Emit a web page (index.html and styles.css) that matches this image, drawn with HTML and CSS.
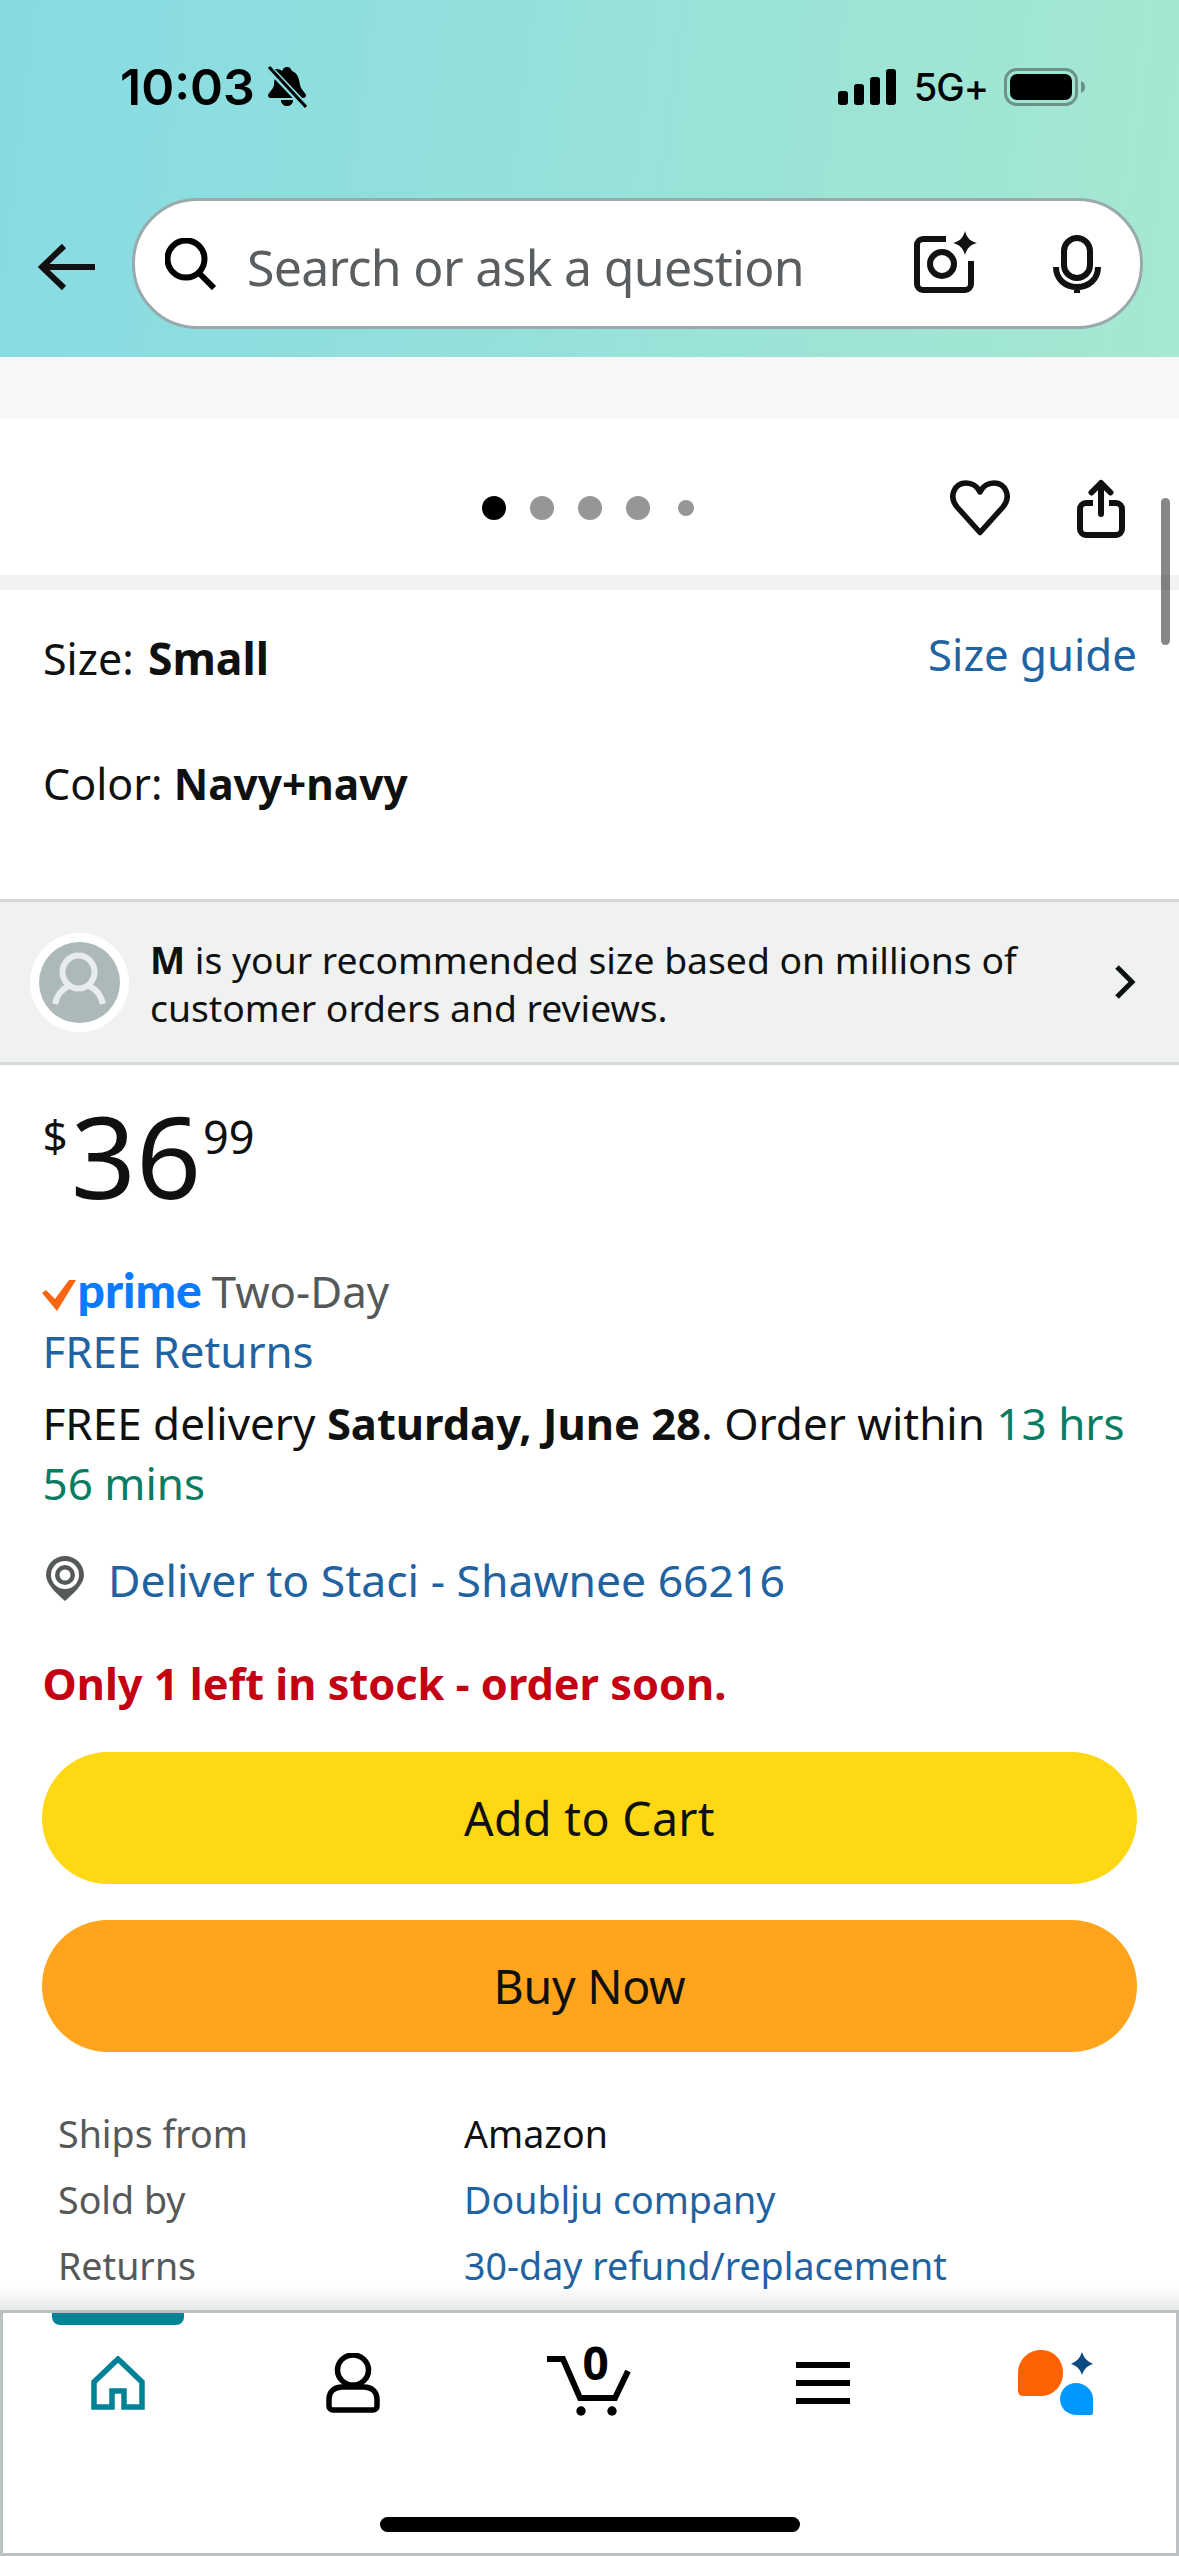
FILE: index.html
```html
<!DOCTYPE html>
<html lang="en">
<head>
<meta charset="utf-8">
<title>Product</title>
<link rel="stylesheet" href="styles.css">
</head>
<body>
<div class="screen">
  <header class="header">
    <div class="status">
      <div class="status-left">
        <span class="time">10:03</span>
        <svg class="bell" viewBox="0 0 40 42"><path d="M20 1c3 0 4 2 5 4 6 2 7 8 8 14 1 5 5 7 6 10 0 2-1 3-3 3H4c-2 0-3-1-3-3 1-3 5-5 6-10 0-3 0-5 2-8L5 5c2-3 8-2 10 0 1-2 2-4 5-4zM14 34h12c0 4-3 6-6 6s-6-2-6-6z" fill="#000"/><path d="M2 2l36 38" stroke="#86dce0" stroke-width="7" fill="none"/><path d="M2 1l37 40" stroke="#000" stroke-width="3" fill="none"/></svg>
      </div>
      <div class="status-right">
        <svg class="signal" viewBox="0 0 58 36"><rect x="0" y="22" width="10" height="14" rx="3"/><rect x="16" y="15" width="10" height="21" rx="3"/><rect x="32" y="8" width="10" height="28" rx="3"/><rect x="48" y="0" width="10" height="36" rx="3"/></svg>
        <span class="net">5G+</span>
        <svg class="battery" viewBox="0 0 82 38"><rect x="1.5" y="1.5" width="71" height="35" rx="11" fill="none" stroke="#6e9289" stroke-width="3"/><rect x="6" y="6" width="62" height="26" rx="7" fill="#000"/><path d="M77 13c3 1 4 3 4 6s-1 5-4 6z" fill="#6e9289"/></svg>
      </div>
    </div>
    <div class="search-row">
      <svg class="back" viewBox="0 0 58 48"><path d="M57 24H5M26 3L4 24l22 21" fill="none" stroke="#111" stroke-width="6"/></svg>
      <div class="search-bar">
        <svg class="search-icon" viewBox="0 0 52 52"><circle cx="21" cy="21" r="18.5" fill="none" stroke="#000" stroke-width="6"/><path d="M34 35l15 15" stroke="#000" stroke-width="6" fill="none"/></svg>
        <span class="placeholder">Search or ask a question</span>
        <svg class="camera" viewBox="0 0 64 62"><path d="M32 8H9a6 6 0 0 0-6 6v39a6 6 0 0 0 6 6h42a6 6 0 0 0 6-6V30" fill="none" stroke="#111" stroke-width="6"/><circle cx="28" cy="33" r="12" fill="none" stroke="#111" stroke-width="6"/><path d="M51 0c2 7 5 10 12 12-7 2-10 5-12 12-2-7-5-10-12-12 7-2 10-5 12-12z" fill="#111"/></svg>
        <svg class="mic" viewBox="0 0 48 58"><rect x="11" y="3" width="26" height="40" rx="13" fill="none" stroke="#111" stroke-width="6"/><path d="M3 32c0 12 9 20 21 20s21-8 21-20M24 50v8" fill="none" stroke="#111" stroke-width="6"/></svg>
      </div>
    </div>
  </header>

  <main class="content">
    <div class="strip"></div>
    <section class="gallery">
      <div></div>
      <div class="dots">
        <span class="dot dot-on"></span><span class="dot"></span><span class="dot"></span><span class="dot"></span><span class="dot dot-small"></span>
      </div>
      <div class="gallery-actions">
        <svg class="heart" viewBox="0 0 60 56"><path d="M30 52.500L7 27C-2 16 5 3 16 3c6 0 11 3 14 9 3-6 8-9 14-9 11 0 18 13 9 24z" fill="none" stroke="#0f1111" stroke-width="5.500" stroke-linejoin="round"/></svg>
        <svg class="share" viewBox="0 0 48 60"><path d="M16 25H9a6 6 0 0 0-6 6v20a6 6 0 0 0 6 6h30a6 6 0 0 0 6-6V31a6 6 0 0 0-6-6h-7" fill="none" stroke="#0f1111" stroke-width="6"/><path d="M24 36V5M14.500 14.500L24 5l9.500 9.500" fill="none" stroke="#0f1111" stroke-width="6" stroke-linecap="round" stroke-linejoin="round"/></svg>
      </div>
    </section>
    <div class="band"></div>
    <section class="options">
      <div class="option-row">
        <span>Size: <b class="val-size">Small</b></span>
        <a class="link size-guide">Size guide</a>
      </div>
      <div class="option-row color-row"><span>Color: <b class="val-color">Navy+navy</b></span></div>
    </section>
    <section class="recommend">
      <div class="avatar">
        <svg viewBox="0 0 81 81"><circle cx="40.500" cy="40.500" r="40.500" fill="#adb9b9"/><ellipse cx="39.500" cy="30" rx="16" ry="16.500" fill="none" stroke="#e8ecec" stroke-width="6"/><path d="M16 62c2-9 7-15 14-18M64 62c-2-9-7-15-14-18" fill="none" stroke="#e8ecec" stroke-width="6"/></svg>
      </div>
      <p class="recommend-text"><b>M</b> is your recommended size based on millions of<br>customer orders and reviews.</p>
      <svg class="chevron" viewBox="0 0 24 36"><path d="M4 3l15 15L4 33" fill="none" stroke="#0f1111" stroke-width="5"/></svg>
    </section>
    <section class="buybox">
      <div class="price"><span class="cur">$</span><span class="whole">36</span><span class="frac">99</span></div>
      <div class="prime-line">
        <svg class="check" viewBox="0 0 34 32"><path d="M0 14l4-3 9 9L27 1l7 0-19 31z" fill="#fa6511"/></svg>
        <span class="prime">prime</span>
        <span class="two-day">Two-Day</span>
      </div>
      <div class="link free-returns">FREE Returns</div>
      <p class="delivery">FREE delivery <b>Saturday, June 28</b>. Order within <span class="green">13 hrs<br>56 mins</span></p>
      <div class="deliver-to">
        <svg class="pin" viewBox="0 0 42 48"><path d="M21 46C12 38 2 29 2 20a19 19 0 0 1 38 0c0 9-10 18-19 26z" fill="#565959"/><circle cx="21" cy="20" r="14" fill="#fff"/><circle cx="21" cy="20" r="10" fill="#565959"/><circle cx="21" cy="20" r="5.500" fill="#fff"/></svg>
        <a class="link">Deliver to Staci - Shawnee 66216</a>
      </div>
      <div class="stock">Only 1 left in stock - order soon.</div>
      <button class="btn btn-cart">Add to Cart</button>
      <button class="btn btn-buy">Buy Now</button>
      <dl class="facts">
        <dt>Ships from</dt><dd>Amazon</dd>
        <dt>Sold by</dt><dd class="link">Doublju company</dd>
        <dt>Returns</dt><dd class="link">30-day refund/replacement</dd>
      </dl>
    </section>
    <div class="scrollbar"></div>
    <div class="nav-shadow"></div>
  </main>

  <nav class="nav">
    <div class="nav-tab"></div>
    <div class="nav-icons">
      <svg class="nav-home" viewBox="0 0 54 54"><path d="M3 51V26L27 3l24 23v25H33V35H21v16z" fill="none" stroke="#008296" stroke-width="5.500"/></svg>
      <svg class="nav-person" viewBox="0 0 54 60"><ellipse cx="27" cy="17" rx="15.500" ry="15" fill="none" stroke="#000" stroke-width="5.500"/><path d="M16 34h22c8 0 13 5 13 12v7a4 4 0 0 1-4 4H7a4 4 0 0 1-4-4v-7c0-7 5-12 13-12z" fill="#fff" stroke="#000" stroke-width="5.500"/></svg>
      <div class="nav-cart">
        <svg viewBox="0 0 84 70"><path d="M0 11h16l17 39h35l13-27" fill="none" stroke="#000" stroke-width="6"/><circle cx="34" cy="63" r="4.700" fill="#000"/><circle cx="65" cy="63" r="4.700" fill="#000"/></svg>
        <span class="cart-count">0</span>
      </div>
      <svg class="nav-menu" viewBox="0 0 54 42"><path d="M0 3h54M0 21h54M0 39h54" stroke="#000" stroke-width="6"/></svg>
      <svg class="nav-rufus" viewBox="0 0 76 66"><path d="M0 23C0 10 10 0 23 0s22 10 22 23-10 23-22 23H5c-3 0-5-2-5-5z" fill="#ff6200"/><path d="M75 63c0 1-1 2-2 2H59c-10 0-17-7-17-16s7-16 16-16 17 7 17 16z" fill="#0098ff"/><path d="M64 2c2 6 5 9 11 12-6 2-9 5-11 11-2-6-5-9-11-11 6-3 9-6 11-12z" fill="#0a4a80"/></svg>
    </div>
    <div class="home-indicator"></div>
  </nav>
</div>
</body>
</html>
```
FILE: styles.css
```css
* { box-sizing: border-box; }
html, body { margin: 0; padding: 0; background: #fff; }
body { font-family: "Noto Sans", "Open Sans", sans-serif; color: #0f1111; }
p, dl, dd, dt { margin: 0; }
.screen { width: 1179px; height: 2556px; display: flex; flex-direction: column; overflow: hidden; }

.header { height: 357px; flex: none; background: linear-gradient(97deg, #86dbe3 0%, #a6e8d1 100%); padding-top: 62px; }
.status { height: 50px; display: flex; justify-content: space-between; align-items: center; padding: 0 93px 0 120px; }
.status-left, .status-right { display: flex; align-items: center; }
.time { font-family: Inter, sans-serif; font-weight: 600; font-size: 50px; color: #000; line-height: 50px; }
.bell { width: 40px; height: 42px; margin-left: 12px; }
.signal { width: 58px; height: 36px; fill: #000; }
.net { font-family: Inter, sans-serif; font-weight: 500; font-size: 38px; letter-spacing: -1px; color: #000; margin-left: 18px; line-height: 50px; }
.battery { width: 82px; height: 38px; margin-left: 16px; }

.search-row { display: flex; align-items: center; margin-top: 86px; padding-left: 38px; }
.back { width: 58px; height: 48px; flex: none; margin: 6px 36px 0 0; }
.search-bar { width: 1011px; height: 131px; border: 3px solid #9aa9ac; border-radius: 65px; background: #fff; display: flex; align-items: center; padding: 0 39px 0 30px; }
.search-icon { width: 52px; height: 52px; flex: none; }
.placeholder { flex: 1; margin: 6px 0 0 30px; font-size: 50px; letter-spacing: -0.7px; color: #5b5e60; }
.camera { width: 64px; height: 62px; flex: none; margin-right: 75px; margin-top: -4px; }
.mic { width: 48px; height: 58px; flex: none; }

.content { flex: 1; position: relative; overflow: hidden; }
.strip { height: 62px; background: #f7f7f7; }
.gallery { height: 156px; display: grid; grid-template-columns: 1fr auto 1fr; align-items: center; padding-top: 59px; align-content: start; }
.dots { display: flex; align-items: center; gap: 24px; height: 60px; padding-right: 4px; }
.dot { width: 24px; height: 24px; border-radius: 50%; background: #949697; }
.dot-on { background: #000; }
.dot-small { width: 16px; height: 16px; margin-left: 4px; }
.gallery-actions { display: flex; justify-content: flex-end; align-items: center; gap: 67px; padding-right: 54px; }
.heart { width: 60px; height: 56px; }
.share { width: 48px; height: 60px; }
.band { height: 15px; background: #f2f2f2; }

.options { height: 309px; padding: 38px 42px 0 43px; font-size: 43px; }
.option-row { display: flex; justify-content: space-between; line-height: 60px; }
.option-row b { font-weight: 700; }
.val-size { font-size: 44.5px; margin-left: 3px; }
.val-color { font-size: 42.4px; }
.color-row { margin-top: 65px; }
.link { color: #2162a1; }
.size-guide { font-size: 43.8px; margin-top: -4px; }

.recommend { height: 166px; border-top: 3px solid #d5d9d9; border-bottom: 3px solid #d5d9d9; background: #f0f2f2; display: flex; align-items: center; padding: 0 42px 0 30px; }
.avatar { width: 99px; height: 99px; flex: none; border-radius: 50%; background: #fff; display: flex; align-items: center; justify-content: center; }
.avatar svg { width: 81px; height: 81px; }
.recommend-text { flex: 1; margin: 3px 0 0 21px; font-size: 37.3px; line-height: 48px; }
.chevron { width: 24px; height: 36px; flex: none; }

.buybox { padding: 0 42px 0 42.5px; }
.price { display: flex; align-items: flex-start; height: 194px; padding-top: 35px; }
.cur { font-size: 44px; line-height: 60px; margin: 5px 3px 0 0; }
.whole { font-size: 114px; line-height: 150px; margin-top: -20px; }
.frac { font-size: 45px; line-height: 60px; margin: 7px 0 0 2px; }
.prime-line { display: flex; align-items: baseline; height: 62px; }
.check { width: 34px; height: 32px; flex: none; align-self: flex-end; margin: 0 2px 10px -1px; }
.prime { font-family: Lato, sans-serif; font-weight: 900; font-size: 48px; color: #0a7bff; line-height: 62px; }
.two-day { font-size: 43.8px; color: #565959; margin-left: 10px; }
.free-returns { font-size: 43.8px; line-height: 60px; }
.delivery { font-size: 44px; line-height: 60px; margin-top: 12px; }
.delivery b { font-size: 43.5px; }
.green { color: #067d62; }
.deliver-to { display: flex; align-items: center; font-size: 44.5px; margin-top: 36px; height: 60px; padding-left: 1.5px; }
.pin { width: 42px; height: 48px; margin-right: 22px; }
.stock { font-size: 43.3px; font-weight: 700; color: #c40012; line-height: 60px; margin-top: 45px; }
.btn { display: block; width: 1095px; margin-left: -0.5px; height: 132px; border: 0; border-radius: 66px; font-family: inherit; font-size: 46.5px; color: #0f1111; }
.btn-cart { background: #fed813; margin-top: 38px; letter-spacing: .3px; }
.btn-buy { background: #ffa41c; margin-top: 36px; letter-spacing: -.3px; }
.facts { display: grid; grid-template-columns: 406px 1fr; font-size: 37.6px; line-height: 66px; margin-top: 49px; padding-left: 15.5px; }
.facts dt { color: #565959; }
.nav-shadow { position: absolute; left: 0; right: 0; bottom: 0; height: 24px; background: linear-gradient(to bottom, rgba(200,205,205,0), rgba(200,205,205,.45)); }
.scrollbar { position: absolute; left: 1161px; top: 141px; width: 9px; height: 147px; border-radius: 5px; background: rgba(0,0,0,.47); }

.nav { height: 246px; flex: none; border: 3px solid #bbc1c3; background: #fff; position: relative; display: flex; flex-direction: column; padding-top: 35px; }
.nav-tab { position: absolute; left: 49px; top: 0; width: 132px; height: 12px; background: #008296; border-radius: 0 0 8px 8px; }
.nav-icons { display: grid; grid-template-columns: repeat(5, 1fr); height: 70px; justify-items: center; align-items: center; }
.nav-home { width: 54px; height: 54px; margin-right: 4px; }
.nav-person { width: 54px; height: 60px; margin-right: 4px; }
.nav-cart { width: 84px; height: 70px; position: relative; }
.nav-cart svg { width: 84px; height: 70px; display: block; }
.cart-count { position: absolute; left: 35px; top: -16px; font-family: "Noto Sans", sans-serif; font-weight: 700; font-size: 46px; line-height: 60px; color: #000; }
.nav-menu { width: 54px; height: 42px; margin-right: 2px; }
.nav-rufus { width: 76px; height: 66px; margin-right: 6px; }
.home-indicator { width: 420px; height: 15px; border-radius: 8px; background: #000; margin: 99px auto 0; }
```
